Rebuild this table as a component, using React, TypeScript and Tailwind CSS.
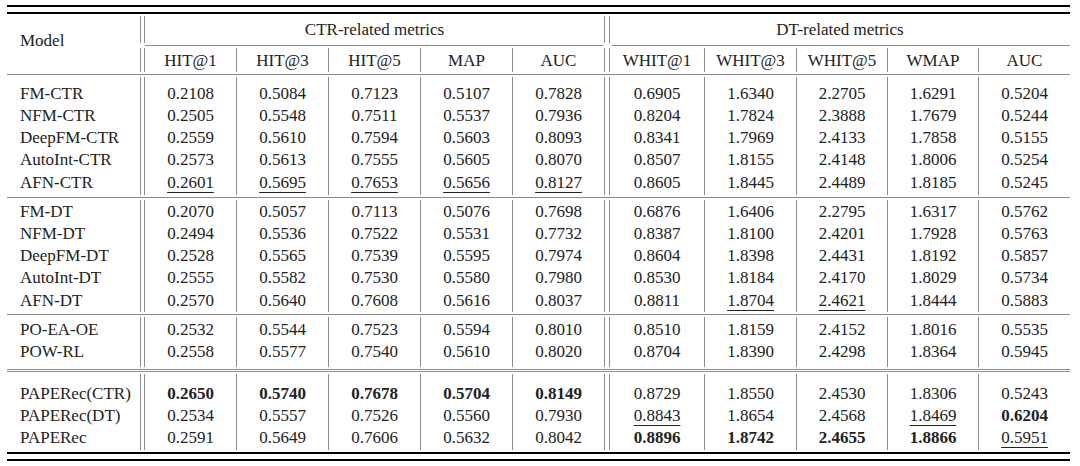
import React from "react";

const CTR_HEADS = ["HIT@1", "HIT@3", "HIT@5", "MAP", "AUC"];
const DT_HEADS = ["WHIT@1", "WHIT@3", "WHIT@5", "WMAP", "AUC"];

// "*" prefix = bold, "_" prefix = underlined (second best)
type Row = { name: string; ctr: string[]; dt: string[] };

const GROUPS: { rows: Row[]; pad: string; wrap: string; double?: boolean }[] = [
  {
    wrap: "h-[122px]",
    pad: "pt-[5px]",
    rows: [
      { name: "FM-CTR", ctr: ["0.2108", "0.5084", "0.7123", "0.5107", "0.7828"], dt: ["0.6905", "1.6340", "2.2705", "1.6291", "0.5204"] },
      { name: "NFM-CTR", ctr: ["0.2505", "0.5548", "0.7511", "0.5537", "0.7936"], dt: ["0.8204", "1.7824", "2.3888", "1.7679", "0.5244"] },
      { name: "DeepFM-CTR", ctr: ["0.2559", "0.5610", "0.7594", "0.5603", "0.8093"], dt: ["0.8341", "1.7969", "2.4133", "1.7858", "0.5155"] },
      { name: "AutoInt-CTR", ctr: ["0.2573", "0.5613", "0.7555", "0.5605", "0.8070"], dt: ["0.8507", "1.8155", "2.4148", "1.8006", "0.5254"] },
      { name: "AFN-CTR", ctr: ["_0.2601", "_0.5695", "_0.7653", "_0.5656", "_0.8127"], dt: ["0.8605", "1.8445", "2.4489", "1.8185", "0.5245"] },
    ],
  },
  {
    wrap: "h-[116px]",
    pad: "pt-0",
    rows: [
      { name: "FM-DT", ctr: ["0.2070", "0.5057", "0.7113", "0.5076", "0.7698"], dt: ["0.6876", "1.6406", "2.2795", "1.6317", "0.5762"] },
      { name: "NFM-DT", ctr: ["0.2494", "0.5536", "0.7522", "0.5531", "0.7732"], dt: ["0.8387", "1.8100", "2.4201", "1.7928", "0.5763"] },
      { name: "DeepFM-DT", ctr: ["0.2528", "0.5565", "0.7539", "0.5595", "0.7974"], dt: ["0.8604", "1.8398", "2.4431", "1.8192", "0.5857"] },
      { name: "AutoInt-DT", ctr: ["0.2555", "0.5582", "0.7530", "0.5580", "0.7980"], dt: ["0.8530", "1.8184", "2.4170", "1.8029", "0.5734"] },
      { name: "AFN-DT", ctr: ["0.2570", "0.5640", "0.7608", "0.5616", "0.8037"], dt: ["0.8811", "_1.8704", "_2.4621", "1.8444", "0.5883"] },
    ],
  },
  {
    wrap: "h-[54px]",
    pad: "pt-[1px]",
    rows: [
      { name: "PO-EA-OE", ctr: ["0.2532", "0.5544", "0.7523", "0.5594", "0.8010"], dt: ["0.8510", "1.8159", "2.4152", "1.8016", "0.5535"] },
      { name: "POW-RL", ctr: ["0.2558", "0.5577", "0.7540", "0.5610", "0.8020"], dt: ["0.8704", "1.8390", "2.4298", "1.8364", "0.5945"] },
    ],
  },
  {
    wrap: "h-[80px]",
    pad: "pt-[8px]",
    double: true,
    rows: [
      { name: "PAPERec(CTR)", ctr: ["*0.2650", "*0.5740", "*0.7678", "*0.5704", "*0.8149"], dt: ["0.8729", "1.8550", "2.4530", "1.8306", "0.5243"] },
      { name: "PAPERec(DT)", ctr: ["0.2534", "0.5557", "0.7526", "0.5560", "0.7930"], dt: ["_0.8843", "1.8654", "2.4568", "_1.8469", "*0.6204"] },
      { name: "PAPERec", ctr: ["0.2591", "0.5649", "0.7606", "0.5632", "0.8042"], dt: ["*0.8896", "*1.8742", "*2.4655", "*1.8866", "_0.5951"] },
    ],
  },
];

// column widths (px) for the 5 CTR and 5 DT cells
const CTR_W = ["w-[92px]", "w-[92px]", "w-[92px]", "w-[92px]", "w-[92px]"];
const DT_W = ["w-[95px]", "w-[92px]", "w-[91px]", "w-[91px]", "w-[91px]"];

const BAR = "border-r border-[#8c8c8c]";

function Value({ v }: { v: string }) {
  if (v.startsWith("*")) return <span className="font-bold">{v.slice(1)}</span>;
  if (v.startsWith("_"))
    return <span className="underline decoration-1 underline-offset-[4px]">{v.slice(1)}</span>;
  return <span>{v}</span>;
}

// one column of a group: the vertical bar runs the full height of the group
function Column({ width, last, pad, items }: { width: string; last?: boolean; pad: string; items: React.ReactNode[] }) {
  return (
    <div className={`${width} ${last ? "" : BAR} ${pad} flex flex-col`}>
      {items.map((it, i) => (
        <div key={i} className="flex h-[22.25px] items-center justify-center">
          {it}
        </div>
      ))}
    </div>
  );
}

function Group({ rows, pad, wrap }: { rows: Row[]; pad: string; wrap: string }) {
  return (
    <div className={`${wrap} py-[2px]`}>
      <div className="flex h-full">
        <div className={`w-[134px] ${BAR} ${pad} flex flex-col`}>
          {rows.map((r) => (
            <div key={r.name} className="flex h-[22.25px] items-center pl-[13px]">
              {r.name}
            </div>
          ))}
        </div>
        <div className={`w-[4px] ${BAR}`} />
        {CTR_W.map((w, c) => (
          <Column key={"c" + c} width={w} pad={pad} items={rows.map((r) => <Value v={r.ctr[c]} />)} />
        ))}
        <div className={`w-[5px] ${BAR}`} />
        {DT_W.map((w, c) => (
          <Column key={"d" + c} width={w} pad={pad} last={c === 4} items={rows.map((r) => <Value v={r.dt[c]} />)} />
        ))}
      </div>
    </div>
  );
}

export default function App() {
  return (
    <div className="h-[466px] w-[1080px] bg-white pt-[5px] text-[17px] leading-none text-[#222] [font-family:'Liberation_Serif',serif]">
      <div className="ml-[7px] w-[1063px]">
        {/* top double rule */}
        <div className="h-[2px] bg-black" />
        <div className="mt-[5px] h-[2px] bg-black" />

        {/* header row 1 */}
        <div className="h-[31px] py-[2px]">
          <div className="flex h-full">
            <div className={`w-[134px] ${BAR} flex items-end pl-[13px]`}>
              <span className="-mb-[6px]">Model</span>
            </div>
            <div className={`w-[4px] ${BAR}`} />
            <div className={`w-[460px] ${BAR} flex items-center justify-center`}>CTR-related metrics</div>
            <div className={`w-[5px] ${BAR}`} />
            <div className="flex w-[460px] items-center justify-center">DT-related metrics</div>
          </div>
        </div>

        {/* cmidrules */}
        <div className="flex h-[1px]">
          <div className="w-[138px]" />
          <div className="w-[458px] bg-[#8c8c8c]" />
          <div className="w-[9px]" />
          <div className="w-[458px] bg-[#8c8c8c]" />
        </div>

        {/* header row 2 */}
        <div className="h-[28px] py-[2px]">
          <div className="flex h-full">
            <div className={`w-[134px] ${BAR}`} />
            <div className={`w-[4px] ${BAR}`} />
            {CTR_HEADS.map((h, i) => (
              <div key={"h" + i} className={`${CTR_W[i]} ${BAR} flex items-center justify-center`}>
                {h}
              </div>
            ))}
            <div className={`w-[5px] ${BAR}`} />
            {DT_HEADS.map((h, i) => (
              <div key={"w" + i} className={`${DT_W[i]} ${i === 4 ? "" : BAR} flex items-center justify-center`}>
                {h}
              </div>
            ))}
          </div>
        </div>

        {GROUPS.map((g, i) => (
          <div key={i}>
            {g.double ? (
              <div>
                <div className="h-[1px] bg-[#8c8c8c]" />
                <div className="mt-[1px] h-[1px] bg-[#8c8c8c]" />
              </div>
            ) : (
              <div className="h-[1px] bg-[#8c8c8c]" />
            )}
            <Group rows={g.rows} pad={g.pad} wrap={g.wrap} />
          </div>
        ))}

        {/* bottom double rule */}
        <div className="h-[2px] bg-black" />
        <div className="mt-[5px] h-[2px] bg-black" />
      </div>
    </div>
  );
}
